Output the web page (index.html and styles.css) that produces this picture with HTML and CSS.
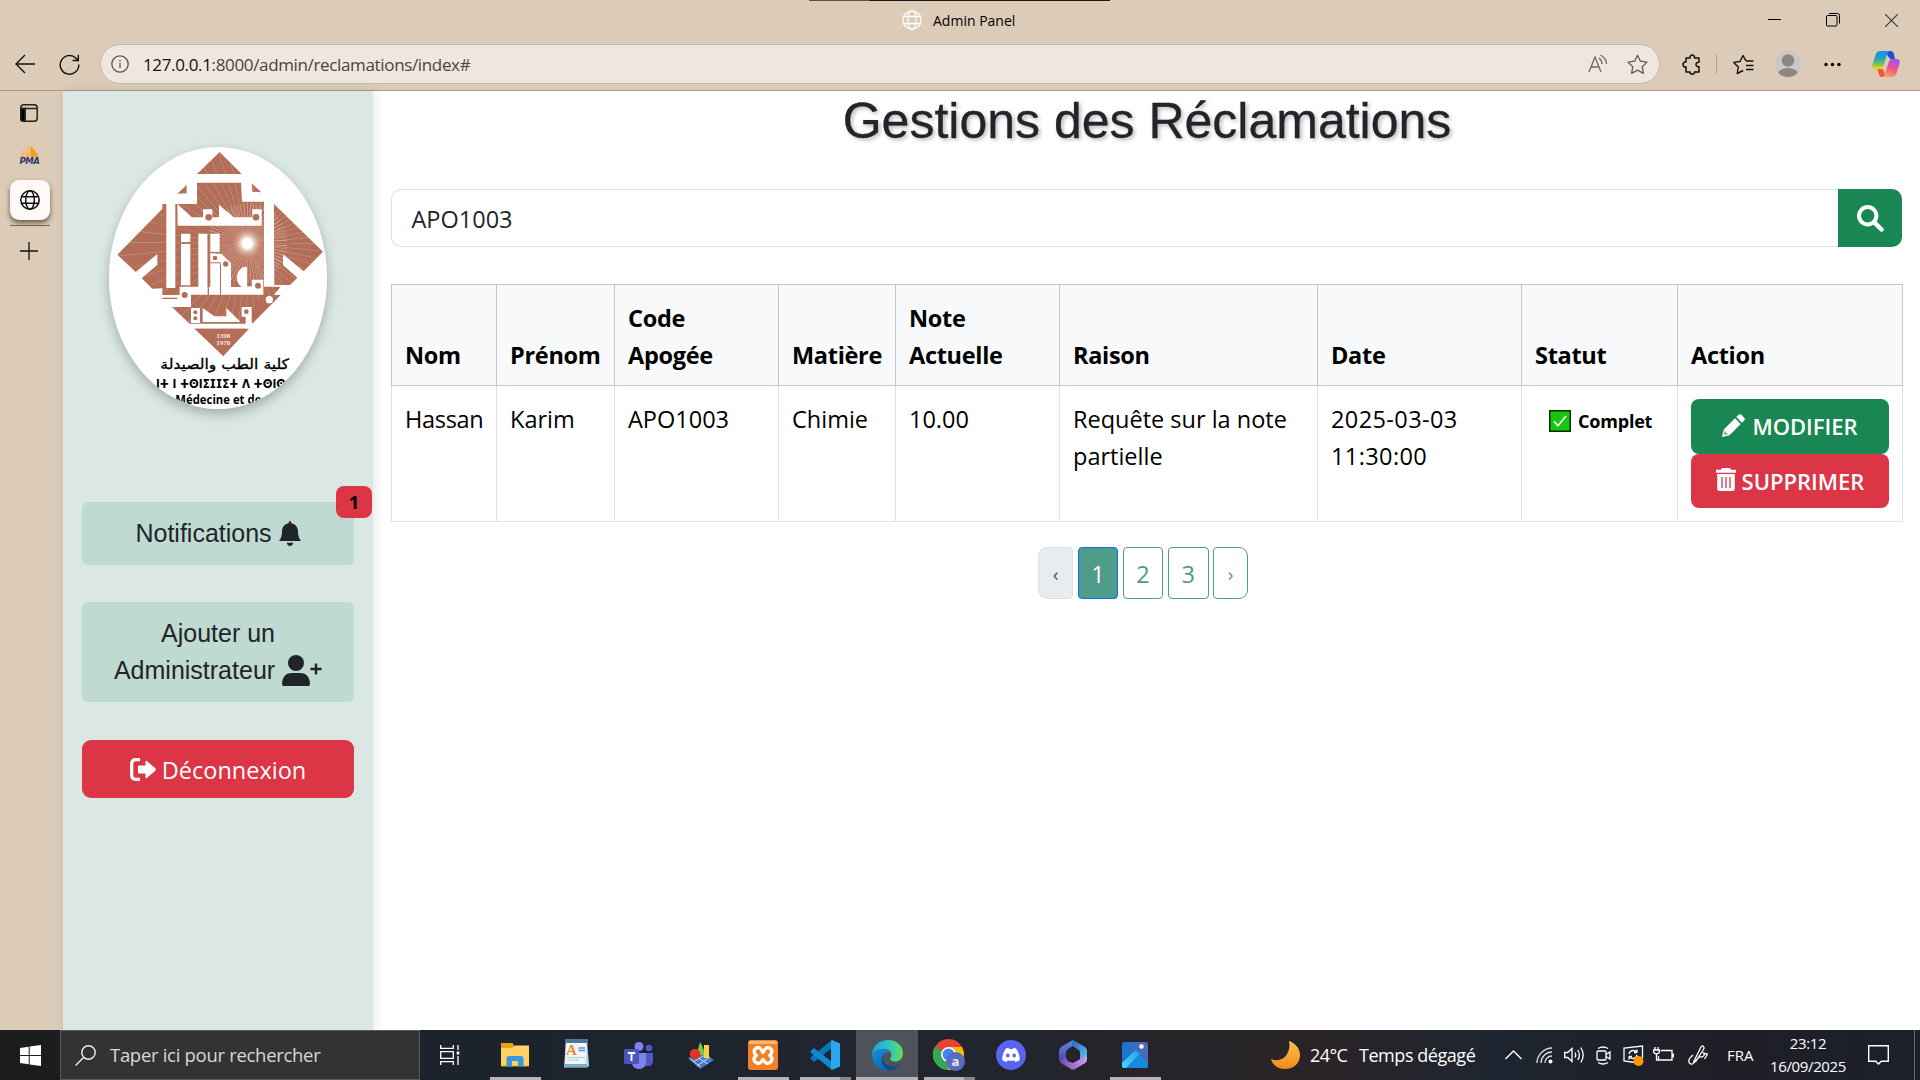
FILE: index.html
```html
<!DOCTYPE html>
<html lang="fr">
<head>
<meta charset="utf-8">
<title>Admin Panel</title>
<link rel="stylesheet" href="styles.css">
</head>
<body>
<header class="browser">
  <div class="titlebar">
    <div class="tab-title">
      <svg width="20" height="20" viewBox="0 0 20 20" fill="none" stroke="#fff" stroke-width="1.3"><circle cx="10" cy="10" r="9.2"/><ellipse cx="10" cy="10" rx="4.3" ry="9.2"/><path d="M1.8 6.5h16.4M1.8 13.5h16.4"/></svg>
      <span>Admin Panel</span>
    </div>
    <div class="window-controls">
      <svg width="13" height="13" viewBox="0 0 13 13"><path d="M0 5.5h13" stroke="#000"/></svg>
      <svg width="14" height="14" viewBox="0 0 14 14" fill="none" stroke="#000"><rect x=".5" y="2.5" width="10.500" height="10.500" rx="1"/><path d="M3 .5h8.500a2 2 0 0 1 2 2v8"/></svg>
      <svg width="13" height="13" viewBox="0 0 13 13" stroke="#333" stroke-width="1.1"><path d="M0 0l13 13M13 0L0 13"/></svg>
    </div>
    <div class="snap-line"></div>
  </div>
  <div class="toolbar">
    <svg class="back" width="20" height="20" viewBox="0 0 20 20" fill="none" stroke="#111" stroke-width="1.4"><path d="M20 10H1M10 1L1 10l9 9"/></svg>
    <svg class="reload" width="21" height="21" viewBox="0 0 21 21" fill="none" stroke="#111" stroke-width="1.4"><path d="M19.800 10.500A9.300 9.300 0 1 1 17 4.200L19.300 6.300M19.300 .8v5.700h-5.700"/></svg>
    <div class="address">
      <svg width="18" height="18" viewBox="0 0 18 18" fill="none" stroke="#555" stroke-width="1.3"><circle cx="9" cy="9" r="8.2"/><path d="M9 8v5M9 5v1.500"/></svg>
      <span class="url"><b>127.0.0.1</b>:8000/admin/reclamations/index#</span>
      <svg class="read-aloud" width="20" height="20" viewBox="0 0 20 20" fill="none" stroke="#6d6860" stroke-width="1.3"><path d="M1 18L7 3l6 15M3 13h8M11 4c2 1.500 3 3.500 3 6M12.500 1c3.500 2 6 5 6 9"/></svg>
      <svg width="21" height="21" viewBox="0 0 21 21" fill="none" stroke="#5f5b55" stroke-width="1.3" stroke-linejoin="round"><path d="M10.500 1.200l2.900 6 6.600.9-4.800 4.600 1.200 6.600-5.900-3.100-5.900 3.100 1.200-6.600L1 8.100l6.600-.9z"/></svg>
    </div>
    <svg class="ext" width="20" height="21" viewBox="0 0 20 21" fill="none" stroke="#111" stroke-width="1.500" stroke-linejoin="round"><path d="M4 4h4c-.5-4 5-4 4.500 0H17v4.300c-4-.6-4 5 0 4.400V18h-4.500c.5 3-5 3-4.500 0H4v-5C0 13.500 0 7.500 4 8z"/></svg>
    <i class="divider"></i>
    <svg class="favs" width="21" height="21" viewBox="0 0 21 21" fill="none" stroke="#111" stroke-width="1.400" stroke-linejoin="round"><path d="M13 7l-3-5.500-3 6-6.300.9L5.300 13l-1.100 6.500 6-3M13 7h7.500M13 11.500h7.500M13 15.500h7.500"/></svg>
    <svg class="profile" width="28" height="28" viewBox="0 0 28 28"><defs><clipPath id="pf"><circle cx="14" cy="14" r="13"/></clipPath></defs><circle cx="14" cy="14" r="13.500" fill="#c9c8c6"/><g fill="#8b8683" clip-path="url(#pf)"><circle cx="14" cy="10.500" r="6.200"/><ellipse cx="14" cy="25" rx="10.500" ry="7"/></g></svg>
    <svg class="dots" width="17" height="5" viewBox="0 0 17 5"><circle cx="2" cy="2.500" r="1.700"/><circle cx="8.500" cy="2.500" r="1.700"/><circle cx="15" cy="2.500" r="1.700"/></svg>
    <svg class="copilot" width="28" height="28" viewBox="0 0 28 28">
      <defs>
        <linearGradient id="cp1" x1="0" y1="0" x2="0" y2="1"><stop offset="0" stop-color="#1a8df0"/><stop offset=".45" stop-color="#26a5b5"/><stop offset=".75" stop-color="#8bc34a"/><stop offset="1" stop-color="#fcd116"/></linearGradient>
        <linearGradient id="cp2" x1=".7" y1="0" x2=".3" y2="1"><stop offset="0" stop-color="#9a55f0"/><stop offset=".5" stop-color="#f2528a"/><stop offset="1" stop-color="#ffa45c"/></linearGradient>
      </defs>
      <path d="M14 1h5q2 0 2.700 2.500L23 9h-5l-4-6z" fill="#1a4fd0"/>
      <path d="M14 27H9.500q-2 0-2.500-2.500L5.500 19H11z" fill="#f1583c"/>
      <path d="M8.500 1H18q-2 0-3 3.500l-3.500 11Q10.500 19 8 19H3.500Q-.5 19 .4 14.500L3.500 5Q4.800 1 8.500 1z" fill="url(#cp1)"/>
      <path d="M19.500 27H10q2 0 3-3.500l3.500-11Q17.500 9 20 9h4.500q4 0 3.100 4.500L24.500 23q-1.300 4-5 4z" fill="url(#cp2)"/>
    </svg>
  </div>
</header>

<div class="body-row">
  <nav class="tab-rail">
    <svg class="pane" width="18" height="18" viewBox="0 0 18 18" fill="none" stroke="#222" stroke-width="1.500"><rect x=".8" y=".8" width="16.400" height="16.400" rx="3"/><path d="M1 4.500h16M5 4.500V17"/><path d="M.8 4.500H5V17H3Q.8 17 .8 15z" fill="#000"/></svg>
    <span class="pma"><svg width="20" height="12" viewBox="0 0 20 12"><path d="M1 12L5.500 3 5 12zM6 12L9.500 0 10.500 12z" fill="#fbb65c"/><path d="M11.500 12V1Q17 5 19.500 12z" fill="#f89c1c"/></svg><em>PMA</em></span>
    <span class="active-tab"><svg width="20" height="20" viewBox="0 0 20 20" fill="none" stroke="#111" stroke-width="1.500"><circle cx="10" cy="10" r="9.200"/><ellipse cx="10" cy="10" rx="4.300" ry="9.200"/><path d="M1.500 6.700h17M1.500 13.300h17"/></svg></span>
    <i class="rail-line"></i>
    <svg class="new-tab" width="18" height="18" viewBox="0 0 18 18" stroke="#111" stroke-width="1.300"><path d="M9 0v18M0 9h18"/></svg>
  </nav>

  <aside class="sidebar">
    <div class="logo">
      <svg width="218" height="262" viewBox="147 51 654 786">
        <defs>
          <clipPath id="kite"><path d="M479 66L545 132H411zM411 158H543L546 215H612V470H662L490 678 336 531H393V495H307V222H411zM380 165V190L352 191zM575 160L604 187 577 185zM319 224V474L277 476 245 445 292 404V372L227 426 172 374zM641 221L789 365 731 424 669 373V405L712 443 690 465H643z"/></clipPath>
          <radialGradient id="sun"><stop offset=".3" stop-color="#fff"/><stop offset=".45" stop-color="#ecd0c5"/><stop offset="1" stop-color="#c98e7b" stop-opacity="0"/></radialGradient>
        </defs>
        <rect x="147" y="51" width="654" height="786" fill="#fff"/>
        <g clip-path="url(#kite)">
          <rect x="147" y="51" width="654" height="640" fill="#b36e57"/>
          <g fill="none" stroke="#e6c4b7">
            <circle cx="562" cy="340" r="210" stroke-width="420" stroke-dasharray=".3 5.700" pathLength="360" opacity=".65"/>
            <circle cx="562" cy="340" r="60" stroke-width="120" stroke-dasharray=".9 4.100" stroke-dashoffset="2" pathLength="360" opacity=".8"/>
          </g>
          <circle cx="562" cy="340" r="46" fill="url(#sun)"/>
        </g>
        <g fill="#fff">
          <path d="M319 190h27v284h-27zM612 187h29v280h-29zM352 222l44 40h33v-24h28v24h20v-38l44 38h56v-24h28v49H353z"/>
          <path d="M363 311h28v25h-28zM363 342h28v124h-28zM415 311h28v160h-28zM451 311h28v54h-28zM451 370l34 2 28 27v72h32q-20-14-12-40 10-24 28-20v58h15v-20h34v45H392v36h-85v-25h52v-35h92z"/>
          <path d="M393 534h27v45h-27zM428 534l35 25h36v-25l40 39v3H428zM545 531h30v55h-18v-26h-12zM380 581h200v15H380zM618 497h24v20l-22 22z"/>
        </g>
        <g fill="#b36e57">
          <circle cx="446" cy="262" r="10"/><circle cx="588" cy="262" r="10"/><circle cx="465" cy="384" r="7"/><circle cx="497" cy="402" r="8"/><circle cx="594" cy="467" r="9"/><circle cx="374" cy="495" r="9"/><circle cx="406" cy="547" r="6"/><circle cx="406" cy="565" r="6"/><circle cx="559" cy="545" r="7"/>
          <path d="M307 503h45v4h-45zM443 311h4v184h-4zM480 400h3v94h-3zM451 397h30v3h-30z"/>
        </g>
        <path d="M612 495h50L576 582V540z" fill="#b36e57"/><circle cx="628" cy="509" r="11" fill="#fff"/>
        <path d="M404 596H567L490 678z" fill="#b36e57"/>
        <g class="logo-year"><text x="490" y="624">1398</text><text x="490" y="645">1978</text></g>
        <text class="logo-ar" x="494" y="717" textLength="386" lengthAdjust="spacingAndGlyphs">كلية الطب والصيدلة</text>
        <text class="logo-tif" x="483" y="774" textLength="390" lengthAdjust="spacingAndGlyphs">ⵏⵜ ⵏ ⵜⵙⵏⵉⵊⵊⵉⵜ ⴷ ⵜⵙⵏⵙ</text>
        <text class="logo-fr" x="475" y="821" textLength="258" lengthAdjust="spacingAndGlyphs">Médecine et de</text>
      </svg>
    </div>
    <a class="side-btn notif">Notifications&nbsp;<svg width="22" height="25" viewBox="0 0 22 25" fill="#212529"><path d="M11 0q1.300 0 1.300 1.500v.7C17 3 19 6.500 19 10.500c0 4.500 1 6.500 3 9.500H0c2-3 3-5 3-9.500C3 6.500 5 3 9.700 2.200v-.7Q9.700 0 11 0zM7.800 21.700h6.400q-.7 3.300-3.200 3.300t-3.200-3.300z"/></svg><span class="badge">1</span></a>
    <a class="side-btn admin"><span>Ajouter un</span><span>Administrateur&nbsp;<svg width="40" height="32" viewBox="0 0 40 32" fill="#212529"><circle cx="14" cy="8" r="8"/><path d="M0 29C0 21 5 18 10 18h8c5 0 10 3 10 11q0 2-1.500 2h-25Q0 31 0 29z"/><path d="M34 8.500v11M28.500 14h11" stroke="#212529" stroke-width="2.400"/></svg></span></a>
    <a class="logout"><svg width="26" height="23" viewBox="0 0 26 23"><path d="M10 1.700H6q-4.300 0-4.300 4.300v11q0 4.300 4.300 4.300h4" fill="none" stroke="#fff" stroke-width="3.200"/><path d="M9 7.500h6.500V4q0-2 1.600-.7l8.200 7q1 1.200 0 2.400l-8.200 7q-1.600 1.300-1.600-.7v-3.500H9q-1 0-1-1.200v-5.600q0-1.200 1-1.200z" fill="#fff"/></svg><span>Déconnexion</span></a>
  </aside>

  <main class="main">
    <h1>Gestions des Réclamations</h1>
    <div class="search">
      <div class="search-input">APO1003</div>
      <div class="search-btn"><svg width="27" height="27" viewBox="0 0 27 27" fill="none" stroke="#fff"><circle cx="10.700" cy="10.700" r="8.700" stroke-width="4"/><path d="M17 17l7.500 7.500" stroke-width="4.500" stroke-linecap="round"/></svg></div>
    </div>
    <table>
      <colgroup><col class="c1"><col class="c2"><col class="c3"><col class="c4"><col class="c5"><col class="c6"><col class="c7"><col class="c8"><col class="c9"></colgroup>
      <thead><tr><th>Nom</th><th>Prénom</th><th>Code<br>Apogée</th><th>Matière</th><th>Note<br>Actuelle</th><th>Raison</th><th>Date</th><th>Statut</th><th>Action</th></tr></thead>
      <tbody><tr><td class="tight">Hassan</td><td>Karim</td><td>APO1003</td><td>Chimie</td><td>10.00</td><td>Requête sur la note<br>partielle</td><td class="wide">2025-03-03<br>11:30:00</td>
        <td><span class="status"><svg width="22" height="22" viewBox="0 0 22 22"><rect x=".75" y=".75" width="20.500" height="20.500" fill="#16c60c" stroke="#0b2d08" stroke-width="1.500"/><path d="M5 11.500l4 4.200L17 6" fill="none" stroke="#fff" stroke-width="1.700"/></svg>Complet</span></td>
        <td><a class="act edit"><svg width="23" height="23" viewBox="0 0 23 23" fill="#fff"><path d="M13 4.300L18.700 10 7.500 21.200 0 23l1.800-7.500zM14.300 3l2.200-2.200q1.400-1.300 2.800 0l2.900 2.900q1.300 1.400 0 2.800L20 8.700z"/><path d="M3 17.500v2.500h2.500" stroke="#198754" stroke-width="1.100" fill="none"/></svg><span>MODIFIER</span></a><a class="act del"><svg width="20" height="23" viewBox="0 0 20 23" fill="#fff"><path d="M6 0h8l1 1.700h5v3H0v-3h5zM1.200 6h17.600v14.500q0 2.500-2.500 2.500H3.700q-2.500 0-2.500-2.500z"/><path d="M6 9v11M10 9v11M14 9v11" stroke="#dc3545" stroke-width="1.300"/></svg><span>SUPPRIMER</span></a></td></tr></tbody>
    </table>
    <div class="pagination"><span class="pg arrow off">‹</span><span class="pg on">1</span><span class="pg">2</span><span class="pg">3</span><span class="pg arrow last">›</span></div>
  </main>
</div>

<footer class="taskbar">
  <div class="start"><svg width="21" height="21" viewBox="0 0 21 21" fill="#fff"><path d="M0 3l8.700-1.200V10H0zM9.700 1.600L21 0v10H9.700zM0 11h8.700v8.200L0 18zM9.700 11H21v10L9.700 19.400z"/></svg></div>
  <div class="tb-search"><svg width="21" height="21" viewBox="0 0 21 21" fill="none" stroke="#eee" stroke-width="1.400"><circle cx="13.500" cy="7.500" r="6.700"/><path d="M8.800 12.200L.6 20.400"/></svg><span>Taper ici pour rechercher</span></div>
  <div class="taskview"><svg width="20" height="20" viewBox="0 0 20 20" fill="none" stroke="#fff" stroke-width="1.300"><path d="M.7 0v3.300h12.600V0M.7 6.700h12.600v6.600H.7zM.7 20v-3.300h12.600V20M18 0v5M18 11v9"/><path d="M16.700 6.500h2.600v3h-2.600z" fill="#fff" stroke="none"/></svg></div>
  <div class="apps">
    <div class="app run"><svg width="28" height="24" viewBox="0 0 28 24"><path d="M0 0h11.500l2 3H28v20.500H0z" fill="#e5a50a"/><path d="M0 5h11l3-2.500h14v20H0z" fill="#ffd363"/><path d="M5.500 23.500v-8q0-2.500 2.500-2.500h12q2.500 0 2.500 2.500v8H17V18h-6v5.500z" fill="#3a96dd"/></svg></div>
    <div class="app"><svg class="lift" width="26" height="29" viewBox="0 0 26 29"><path d="M2 1h21l2 26-2 1.500H0z" fill="#b9dcef"/><path d="M2 3h20.500L21.500 25H1z" fill="#f0f6fa"/><path d="M1 0h23v4H1z" fill="#4f7898"/><path d="M0 25h23l2 3H1z" fill="#79afca"/><path d="M14.500 9h6.500M14.500 11.500h6.500" stroke="#5b93c8" stroke-width="1.500"/><path d="M3 18.500h18M3 21h12" stroke="#b5c6d2"/><text class="wp-a" x="2" y="16">A</text></svg></div>
    <div class="app"><svg width="30" height="27" viewBox="0 0 30 27"><circle cx="15" cy="4.500" r="4.500" fill="#7b83eb"/><circle cx="25" cy="6" r="3.200" fill="#5059c9"/><path d="M19 11h10v8q0 5-5 5h-5z" fill="#5059c9"/><path d="M8 11h14v9q0 7-7 7t-7-7z" fill="#7b83eb"/><rect y="7" width="15" height="15" rx="1.500" fill="#4b53bc"/><path d="M3.800 11h7.400M7.500 11v8" stroke="#fff" stroke-width="1.900"/></svg></div>
    <div class="app"><svg width="28" height="30" viewBox="0 0 28 30"><path d="M1 18l14-6 12 8-14 9z" fill="#4a78bd"/><path d="M3 19l11 8M8 16l13 8M6 22l14-8M10 26l13-9" stroke="#c4dcff" stroke-width="1"/><path d="M13 2q5 8 4 14l-7-3z" fill="#7ac943"/><path d="M17 5h5v13h-5z" fill="#f7d23e"/><circle cx="8" cy="14" r="5.300" fill="#e33127"/></svg></div>
    <div class="app run"><svg width="30" height="30" viewBox="0 0 30 30"><rect width="30" height="30" rx="3" fill="#f47f24"/><path d="M1 1h28v3H1z" fill="#f9b77b"/><path d="M8.500 8q3-2 6 3.500 0 1.500 1 0 3-5.500 6-3.500 4.500 3 .5 7.500 4 4 0 7-4 2.500-6.500-2.500-.5-1-1 0-2.500 5-6.500 2.500-4-3 0-7-4-4.500.5-7.500z" fill="none" stroke="#fff" stroke-width="3.400"/></svg></div>
    <div class="app run multi"><svg width="30" height="30" viewBox="0 0 30 30"><path d="M22 0v8L4 22l-3.500-3v-1.500z" fill="#0877b9"/><path d="M22 30v-8L4 8 .5 11v1.500z" fill="#1089d3"/><path d="M22 0l8 3.500v23L22 30q-1-.5-1-1.500v-27Q21 .5 22 0z" fill="#29a8f2"/></svg></div>
    <div class="app run current"><svg width="31" height="31" viewBox="0 0 31 31"><defs><linearGradient id="e1" x1="0" x2="1"><stop stop-color="#17a5df"/><stop offset=".5" stop-color="#2bc3c7"/><stop offset="1" stop-color="#67df52"/></linearGradient><linearGradient id="e2" x1="0" y1="0" x2=".6" y2="1"><stop stop-color="#168fdb"/><stop offset="1" stop-color="#0869bd"/></linearGradient></defs><path d="M0 14C1 5 8 0 16 0c9 0 15 6 15 13 0 6-4 8.500-8 8.500-3 0-5-1-5-2.500 0-1 1.500-2 1.500-4 0-4-4-6-8-6C6 9 2 11 0 14z" fill="url(#e1)"/><path d="M0 14c2-3.500 6-5 10-5 3.500 0 7 1.500 8.500 4-5-2-8 1.500-8 5.500 0 6 5 10 9 11.500C9 32 0 26 0 14z" fill="url(#e2)"/><path d="M13 13c-6 8 2 14 9 13 3 0 5-1 6.500-2.500-2 4-6 6.500-10 7C11 29 6 19 13 13z" fill="#114a8b"/></svg></div>
    <div class="app run multi"><svg width="32" height="32" viewBox="0 0 32 32"><path d="M15.500 15.500L2 8A15.500 15.500 0 0 1 29 8z" fill="#ea4335"/><path d="M15.500 15.500L2 7.500A15.500 15.500 0 0 0 15 31z" fill="#34a853"/><path d="M15.500 8H29A15.500 15.500 0 0 1 15 31z" fill="#fbbc05"/><circle cx="15.500" cy="15.500" r="7.500" fill="#fff"/><circle cx="15.500" cy="15.500" r="5.900" fill="#4285f4"/><circle cx="22.500" cy="22.500" r="9.500" fill="#5c6bc0"/><text class="chrome-a" x="22.500" y="27">a</text></svg></div>
    <div class="app"><svg width="30" height="30" viewBox="0 0 30 30"><circle cx="15" cy="15" r="15" fill="#5865f2"/><path d="M10 8.500l2.500-.7.700 1.200h3.600l.7-1.200 2.500.7c2.500 3.500 4 7.500 3.700 11.500-1.500 1.200-3 1.700-4.500 2l-1-1.700q-3.200 1-6.400 0l-1 1.700c-1.500-.3-3-.8-4.500-2C6 16 7.500 12 10 8.500z" fill="#fff"/><ellipse cx="11.800" cy="15.500" rx="1.800" ry="2" fill="#5865f2"/><ellipse cx="18.200" cy="15.500" rx="1.800" ry="2" fill="#5865f2"/></svg></div>
    <div class="app"><svg width="28" height="30" viewBox="0 0 28 30"><defs><linearGradient id="m1" x1="0" y1="0" x2="0" y2="1"><stop stop-color="#5d8be0"/><stop offset="1" stop-color="#5139a0"/></linearGradient><linearGradient id="m2" x1="0" y1="0" x2="1" y2="1"><stop stop-color="#2c60c4"/><stop offset="1" stop-color="#5bd0f5"/></linearGradient><linearGradient id="m3"><stop stop-color="#6e4cb8"/><stop offset="1" stop-color="#d59ae8"/></linearGradient></defs><path d="M14 0L3.500 6Q0 8 0 11v8q0 3 3.500 5l5-2.500q-1.500-1-1.500-3v-6q0-2 2-3.500l7-4.500z" fill="url(#m1)"/><path d="M14 0L24.500 6Q28 8 28 11v8q0 3-2.500 4.500l-4.500-3v-8q0-2-2-3L13 5.500z" fill="url(#m2)"/><path d="M7 17q0 3 2.500 4.500L14 23l12-6.500 2 .5v2q0 3-3.500 5L16 29q-2 1-4 0L3.500 24Q2 23 1 21.500z" fill="url(#m3)"/></svg></div>
    <div class="app run"><svg width="26" height="26" viewBox="0 0 26 26"><defs><linearGradient id="p1" x1="0" y1="0" x2="1" y2="0"><stop stop-color="#1678d2"/><stop offset="1" stop-color="#5865b8"/></linearGradient><linearGradient id="p2" x1="0" y1="1" x2="1" y2="0"><stop stop-color="#4ed7fb"/><stop offset="1" stop-color="#20a6ed"/></linearGradient></defs><rect width="26" height="26" rx="2.500" fill="url(#p1)"/><path d="M13 9q1-.8 2 0l11 12v2.500q0 2.500-2.500 2.500H3z" fill="#1a88e0"/><path d="M0 21L12 9.500q1.500-1 3 0l2.500 2.500L4 26H2.500Q0 26 0 23.500z" fill="url(#p2)"/><circle cx="19.500" cy="4.500" r="2.300" fill="#fff"/></svg></div>
  </div>
  <div class="weather"><svg width="29" height="29" viewBox="0 0 29 29"><defs><linearGradient id="mo" x1="0" y1="0" x2="0" y2="1"><stop stop-color="#fcc04b"/><stop offset="1" stop-color="#f38b1c"/></linearGradient></defs><path d="M18 0c7 2.500 11 8 11 14 0 8-6 14-15 14C8 28 2 25 0 18c6 2.500 12 1 15.500-4 3-4.500 3.500-9 2.500-14z" fill="url(#mo)"/></svg><span class="temp">24°C</span><span class="sky">Temps dégagé</span></div>
  <div class="tray">
    <svg class="chevron" width="17" height="10" viewBox="0 0 17 10" fill="none" stroke="#fff" stroke-width="1.400"><path d="M.5 9l8-8 8 8"/></svg>
    <svg width="17" height="17" viewBox="0 0 17 17" fill="none" stroke="#ddd" stroke-width="1.300"><path d="M1 16C1 8 8 1 16 1M5 16C5 10 10 5 16 5M9 16c0-4 3-7 7-7"/><circle cx="14.500" cy="14.500" r="2" fill="#fff" stroke="none"/></svg>
    <svg width="21" height="18" viewBox="0 0 21 18" fill="none" stroke="#fff" stroke-width="1.300"><path d="M.7 6.500h3L8 2.500v13l-4.300-4h-3zM11 6.500q1.500 2.500 0 5M13.800 4q3.200 5 0 10M16.700 1.500q5 7.500 0 15"/></svg>
    <svg width="16" height="19" viewBox="0 0 16 19" fill="none" stroke="#fff" stroke-width="1.300"><rect x="1" y="5" width="9" height="9" rx="1"/><path d="M10 8.500l4-2.500v7l-4-2.500M2 2.500q5-3 10 0M2 16.500q5 3 10 0"/></svg>
    <svg width="22" height="21" viewBox="0 0 22 21" fill="none" stroke="#fff" stroke-width="1.300"><path d="M12 17.500L1 16V3l18.500-2v12M6 9q1-3.500 4-3.500t4 2V4.500M14 7.500h-3M14 10q-1 3.500-4 3.500t-4-2v3M6 11.500h3"/><circle cx="15.500" cy="16" r="5" fill="#ff9800" stroke="none"/></svg>
    <svg class="battery" width="21" height="16" viewBox="0 0 21 16" fill="none" stroke="#fff" stroke-width="1.300"><path d="M7.500 3.500H19v9.500H5.500V9M20.300 6.500v4M2 0v3M5 0v3M.7 3h5.600v2.500q-2.800 3-5.600 0zM3.500 7v6h2"/></svg>
    <svg class="pen" width="20" height="20" viewBox="0 0 20 20" fill="none" stroke="#fff" stroke-width="1.300"><path d="M6 16L13 2q1.500-2 2.500-.5t0 3L8 16l-2.500 2zM5 10q-6 5-3.500 8t6-2 6-4q4-1 2-4l4 1-3 5"/></svg>
  </div>
  <div class="lang">FRA</div>
  <div class="clock"><span>23:12</span><span class="date">16/09/2025</span></div>
  <svg class="action-center" width="21" height="20" viewBox="0 0 21 20" fill="none" stroke="#fff" stroke-width="1.400"><path d="M.7.700h19.600v15.600h-7L10.500 19l-2.800-2.700h-7z"/></svg>
  <i class="peek"></i>
</footer>
</body>
</html>
```
FILE: styles.css
```css
* { box-sizing: border-box; }
body {
  margin: 0;
  width: 1920px;
  height: 1080px;
  overflow: hidden;
  display: flex;
  flex-direction: column;
  background: #fff;
  font-family: "Open Sans", "Noto Sans", sans-serif;
  color: #000;
}
svg { flex: none; display: block; }

/* Browser chrome */
.browser { height: 91px; flex: none; background: #dbcbb7; }
.titlebar { position: relative; height: 40px; display: flex; align-items: center; }
.tab-title { display: flex; align-items: center; gap: 11px; margin-left: 902px; font-size: 14px; letter-spacing: 0; }
.window-controls { display: flex; align-items: center; gap: 45px; margin: 0 22.500px 0 auto; }
.snap-line { position: absolute; left: 809px; top: 0; width: 301px; height: 1px; background: linear-gradient(90deg, #555 60px, #1c1c1c 60px); }
.toolbar { height: 51px; display: flex; align-items: center; padding: 0 14px 2px 15px; border-bottom: 1px solid #a99987; }
.reload { margin-left: 24px; }
.address { display: flex; align-items: center; width: 1560px; height: 40px; margin-left: 20px; padding: 0 11px 0 10px; border: 1px solid #c1bab2; border-radius: 20px; background: #efe7de; }
.url { margin-left: 14px; flex: 1; font-size: 17px; letter-spacing: -.35px; color: #444; }
.url b { font-weight: 400; color: #111; }
.read-aloud { margin-right: 19px; }
.ext { margin-left: 22px; }
.divider { width: 1px; height: 20px; margin: 0 16px 0 14px; background: #b1a28f; }
.profile { margin-left: 20px; }
.dots { margin-left: 22px; }
.copilot { margin-left: 31px; }

.body-row { display: flex; height: 939px; flex: none; }
.tab-rail { width: 63px; flex: none; background: #dbcbb7; display: flex; flex-direction: column; align-items: center; padding: 13px 4px 0 0; }
.pane, .new-tab { margin-right: 1px; }
.pma { height: 23px; margin-top: 23px; display: flex; flex-direction: column; align-items: center; }
.pma em { font: italic 700 8.500px/8px "DejaVu Sans", sans-serif; color: #33356b; letter-spacing: -.4px; }
.active-tab { width: 40px; height: 40px; margin-top: 12px; border-radius: 9px; background: #fcf9f6; display: grid; place-items: center; box-shadow: 0 3px 5px rgba(60, 45, 25, .7); }
.rail-line { width: 40px; height: 1px; background: #6d6459; margin: 5px 0 16px; }

/* Page sidebar */
.sidebar { width: 310px; flex: none; padding: 56px 19px 0; background: #dae7e3; box-shadow: 2px 0 10px rgba(0, 0, 0, .1); z-index: 1; font-family: "Liberation Sans", Arial, sans-serif; font-size: 25px; line-height: 37.500px; color: #212529; }
.logo { width: 218px; height: 262px; margin: 0 auto 93px 27px; border-radius: 50%; overflow: hidden; box-shadow: 0 5px 12px rgba(0, 0, 0, .25); }
.logo-year { font: 700 21px "Liberation Serif", serif; fill: #f6e6e0; text-anchor: middle; }
.logo-ar { font: 42px "DejaVu Sans", sans-serif; text-anchor: middle; stroke: #000; stroke-width: 1px; }
.logo-tif { font: 700 36px "DejaVu Sans", sans-serif; text-anchor: middle; }
.logo-fr { font: 700 36px "Open Sans", sans-serif; text-anchor: middle; }
.side-btn { position: relative; width: 272px; display: flex; align-items: center; justify-content: center; border-radius: 6px; background: #bfdad1; }
.notif { height: 63px; }
.badge { position: absolute; left: 254px; top: -16px; width: 36px; height: 32px; border-radius: 8px; background: #dc3545; color: #000; text-align: center; font: 700 18.500px/31px "Open Sans", sans-serif; }
.admin { height: 100px; margin-top: 37px; flex-direction: column; }
.admin span { display: flex; align-items: center; height: 37.500px; }
.logout { width: 272px; height: 58px; margin-top: 38px; display: flex; align-items: center; justify-content: center; gap: 6px; border-radius: 9px; background: #dc3545; color: #fff; font: 23.500px "Open Sans", sans-serif; }
.logout span { padding-top: 1px; }

/* Main column */
.main { flex: 1; padding: 0 18px; }
h1 { height: 60px; margin: 0 0 38px; text-align: center; font: 400 50px/60px "Liberation Sans", Arial, sans-serif; color: #212529; text-shadow: 2px 2px 4px rgba(0, 0, 0, .3); -webkit-text-stroke: .3px #212529; }
.search { display: flex; width: 1511px; height: 58px; }
.search-input { flex: 1; padding: 1px 20px 0 19.500px; border: 1px solid #dee2e6; border-right: 0; border-radius: 10px 0 0 10px; font-size: 23.500px; line-height: 57px; color: #212529; }
.search-btn { width: 64px; border-radius: 0 10px 10px 0; background: #198754; display: grid; place-items: center; }
table { width: 1511px; margin-top: 37px; border-collapse: collapse; table-layout: fixed; font-size: 23.500px; line-height: 37px; white-space: nowrap; }
.c1 { width: 105px; } .c2 { width: 118px; } .c3 { width: 164px; } .c4 { width: 117px; } .c5 { width: 164px; }
.c6 { width: 258px; } .c7 { width: 204px; } .c8 { width: 156px; } .c9 { width: 225px; }
th { height: 101px; padding: 15px 13px 11px; text-align: left; vertical-align: bottom; font-weight: 700; font-size: 23.500px; letter-spacing: -.3px; background: #f8f9fa; border: 1px solid #c6c7c8; }
td { height: 136px; padding: 15px 13px 11px; vertical-align: top; border: 1px solid #dee2e6; border-top-color: #c6c7c8; }
.tight { letter-spacing: -.3px; }
.wide { letter-spacing: .4px; }
.status { display: flex; align-items: center; gap: 7px; height: 40px; padding-left: 14px; font-weight: 700; font-size: 18px; letter-spacing: -.2px; }
.act { display: flex; align-items: center; justify-content: center; gap: 6px; width: 198px; height: 54px; border-radius: 8px; color: #fff; font-weight: 600; font-size: 22px; }
.edit { background: #198754; margin-top: -2px; height: 55px; gap: 7px; }
.del { background: #dc3545; }
.act svg { margin-top: -3px; }
.pagination { display: flex; gap: 4.500px; margin: 25px 0 0 647px; }
.pg { width: 40.700px; height: 52px; border: 1px solid #4e9c89; border-radius: 4px; color: #4e9c89; text-align: center; font-size: 23.500px; line-height: 52px; }
.arrow { width: 35px; font-size: 19px; }
.off { border-color: #dee2e6; border-radius: 9px 4px 4px 9px; background: #e9ecef; color: #4a4f54; }
.on { border-color: #0d6efd; background: #4e9c89; color: #fff; }
.last { border-radius: 4px 9px 9px 4px; }

/* Taskbar */
.taskbar { height: 50px; flex: none; display: flex; align-items: center; background: linear-gradient(90deg, #1c1c1e 0, #1c232c 23%, #20252f 45%, #262529 63%, #2b2427 68%, #1e2530 78%, #1f1e26 90%, #1b202b); color: #fff; z-index: 2; }
.start { width: 60px; padding-left: 20px; }
.tb-search { width: 360px; height: 50px; display: flex; align-items: center; gap: 14px; padding-left: 14px; background: #333; border: 1px solid #5a5a5a; color: #d8d8d8; font-size: 18.500px; letter-spacing: -.3px; }
.tb-search span { padding-bottom: 1px; }
.taskview { width: 64px; padding-left: 20px; }
.apps { display: flex; }
.app { width: 62px; height: 50px; display: grid; place-items: center; position: relative; }
.lift { margin-bottom: 3px; }
.wp-a { font: 700 15px "Liberation Serif", serif; fill: #f08a2c; }
.chrome-a { font: 700 13px "Open Sans", sans-serif; fill: #e8eaf6; text-anchor: middle; }
.run::after { content: ""; position: absolute; left: 6px; bottom: 0; width: 51px; height: 3px; background: #b8b3b7; }
.multi::after { background: linear-gradient(90deg, #b8b3b7 40px, #8b878c 40px); }
.current { background: #50525a; }
.current::after { left: 0; width: 62px; }
.weather { display: flex; align-items: center; margin-left: 105px; font-size: 18px; }
.temp { width: 38px; margin-left: 10px; letter-spacing: -.6px; }
.sky { width: 116px; margin-left: 11px; letter-spacing: -.45px; white-space: nowrap; }
.tray { display: flex; align-items: center; gap: 11px; margin-left: 30px; }
.chevron { margin-right: 3px; }
.battery { margin-left: -3px; }
.pen { margin-left: 3px; }
.lang { width: 28px; margin-left: 19px; font-size: 15px; }
.clock { width: 96px; margin-left: 5px; display: flex; flex-direction: column; align-items: center; font-size: 15px; line-height: 23px; letter-spacing: -.35px; }
.action-center { margin-left: auto; margin-right: 25px; }
.peek { width: 1px; height: 50px; margin-right: 5px; background: #686b72; }
```
